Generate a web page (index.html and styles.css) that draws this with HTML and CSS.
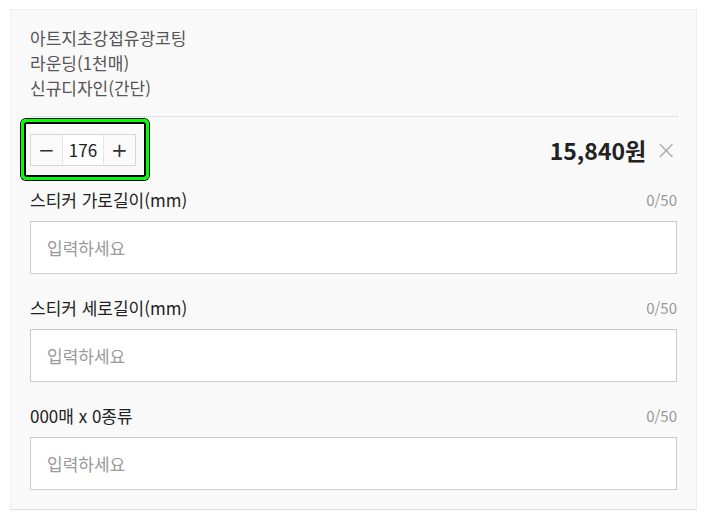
FILE: index.html
```html
<!DOCTYPE html>
<html lang="ko">
<head>
    <meta charset="UTF-8">
    <meta name="viewport" content="width=device-width, initial-scale=1.0">
    <title>옵션 선택</title>
    <link rel="stylesheet" href="styles.css">
</head>
<body>
    <div class="option-box">
        <div class="option-name">
            <p>아트지초강접유광코팅</p>
            <p>라운딩(1천매)</p>
            <p>신규디자인(간단)</p>
        </div>
        <div class="option-row">
            <div class="qty-wrap">
                <div class="qty">
                    <button class="qty-btn">&minus;</button>
                    <span class="qty-num">176</span>
                    <button class="qty-btn">+</button>
                </div>
            </div>
            <div class="price-wrap">
                <strong class="price">15,840원</strong>
                <button class="remove">&times;</button>
            </div>
        </div>

        <div class="field">
            <div class="field-head">
                <label>스티커 가로길이(mm)</label>
                <span class="count">0/50</span>
            </div>
            <input type="text" placeholder="입력하세요">
        </div>
        <div class="field">
            <div class="field-head">
                <label>스티커 세로길이(mm)</label>
                <span class="count">0/50</span>
            </div>
            <input type="text" placeholder="입력하세요">
        </div>
        <div class="field">
            <div class="field-head">
                <label>000매 x 0종류</label>
                <span class="count">0/50</span>
            </div>
            <input type="text" placeholder="입력하세요">
        </div>
    </div>
</body>
</html>
```

FILE: styles.css
```css
body {
    margin: 0;
    padding: 9px 7px 0 10px;
    background-color: #fff;
    font-family: "Noto Sans CJK KR", "Noto Sans", sans-serif;
    color: #222;
}
.option-box {
    background-color: #f9f9f9;
    border: 1px solid #eee;
    border-bottom-color: #ddd;
    padding: 15px 19px 19px 19px;
}
.option-name {
    padding-bottom: 16px;
    border-bottom: 1px dotted #ccc;
}
.option-name p {
    margin: 0;
    font-size: 17px;
    line-height: 25px;
    color: #555;
}
.option-row {
    display: flex;
    justify-content: space-between;
    align-items: center;
    padding-top: 17px;
}
.qty-wrap {
    position: relative;
}
.qty-wrap::after {
    content: "";
    position: absolute;
    left: -9px;
    top: -15px;
    width: 122px;
    height: 55px;
    border: 3px solid #0f0;
    border-radius: 5px;
    box-shadow: inset 0 0 0 2px #000, 0 0 0 1px #000;
    pointer-events: none;
}
.qty {
    display: flex;
    border: 1px solid #d6d6d6;
    background-color: #fff;
    height: 30px;
}
.qty-btn {
    width: 31px;
    border: none;
    padding: 0;
    background-color: #fafafa;
    font-family: "DejaVu Sans", sans-serif;
    font-size: 20px;
    line-height: 28px;
    color: #333;
    cursor: pointer;
}
.qty-num {
    width: 40px;
    border-left: 1px solid #e6e6e6;
    border-right: 1px solid #e6e6e6;
    text-align: center;
    font-size: 17px;
    line-height: 30px;
    color: #222;
}
.price-wrap {
    display: flex;
    align-items: center;
    gap: 9px;
}
.price {
    font-size: 23px;
    line-height: 30px;
    font-weight: bold;
    color: #222;
}
.remove {
    border: none;
    background: none;
    padding: 0;
    font-family: "DejaVu Sans", sans-serif;
    font-size: 26px;
    line-height: 26px;
    font-weight: 300;
    color: #aaa;
    cursor: pointer;
}
.field {
    margin-top: 22px;
}
.field-head {
    display: flex;
    justify-content: space-between;
    align-items: center;
    height: 22px;
    margin-bottom: 11px;
}
.field-head label {
    font-size: 17px;
    color: #222;
}
.count {
    font-size: 15px;
    color: #999;
}
.field input {
    display: block;
    box-sizing: border-box;
    width: 100%;
    height: 53px;
    border: 1px solid #ccc;
    background-color: #fff;
    padding: 0 16px;
    font-family: inherit;
    font-size: 17px;
}
.field input::placeholder {
    color: #999;
}
```
